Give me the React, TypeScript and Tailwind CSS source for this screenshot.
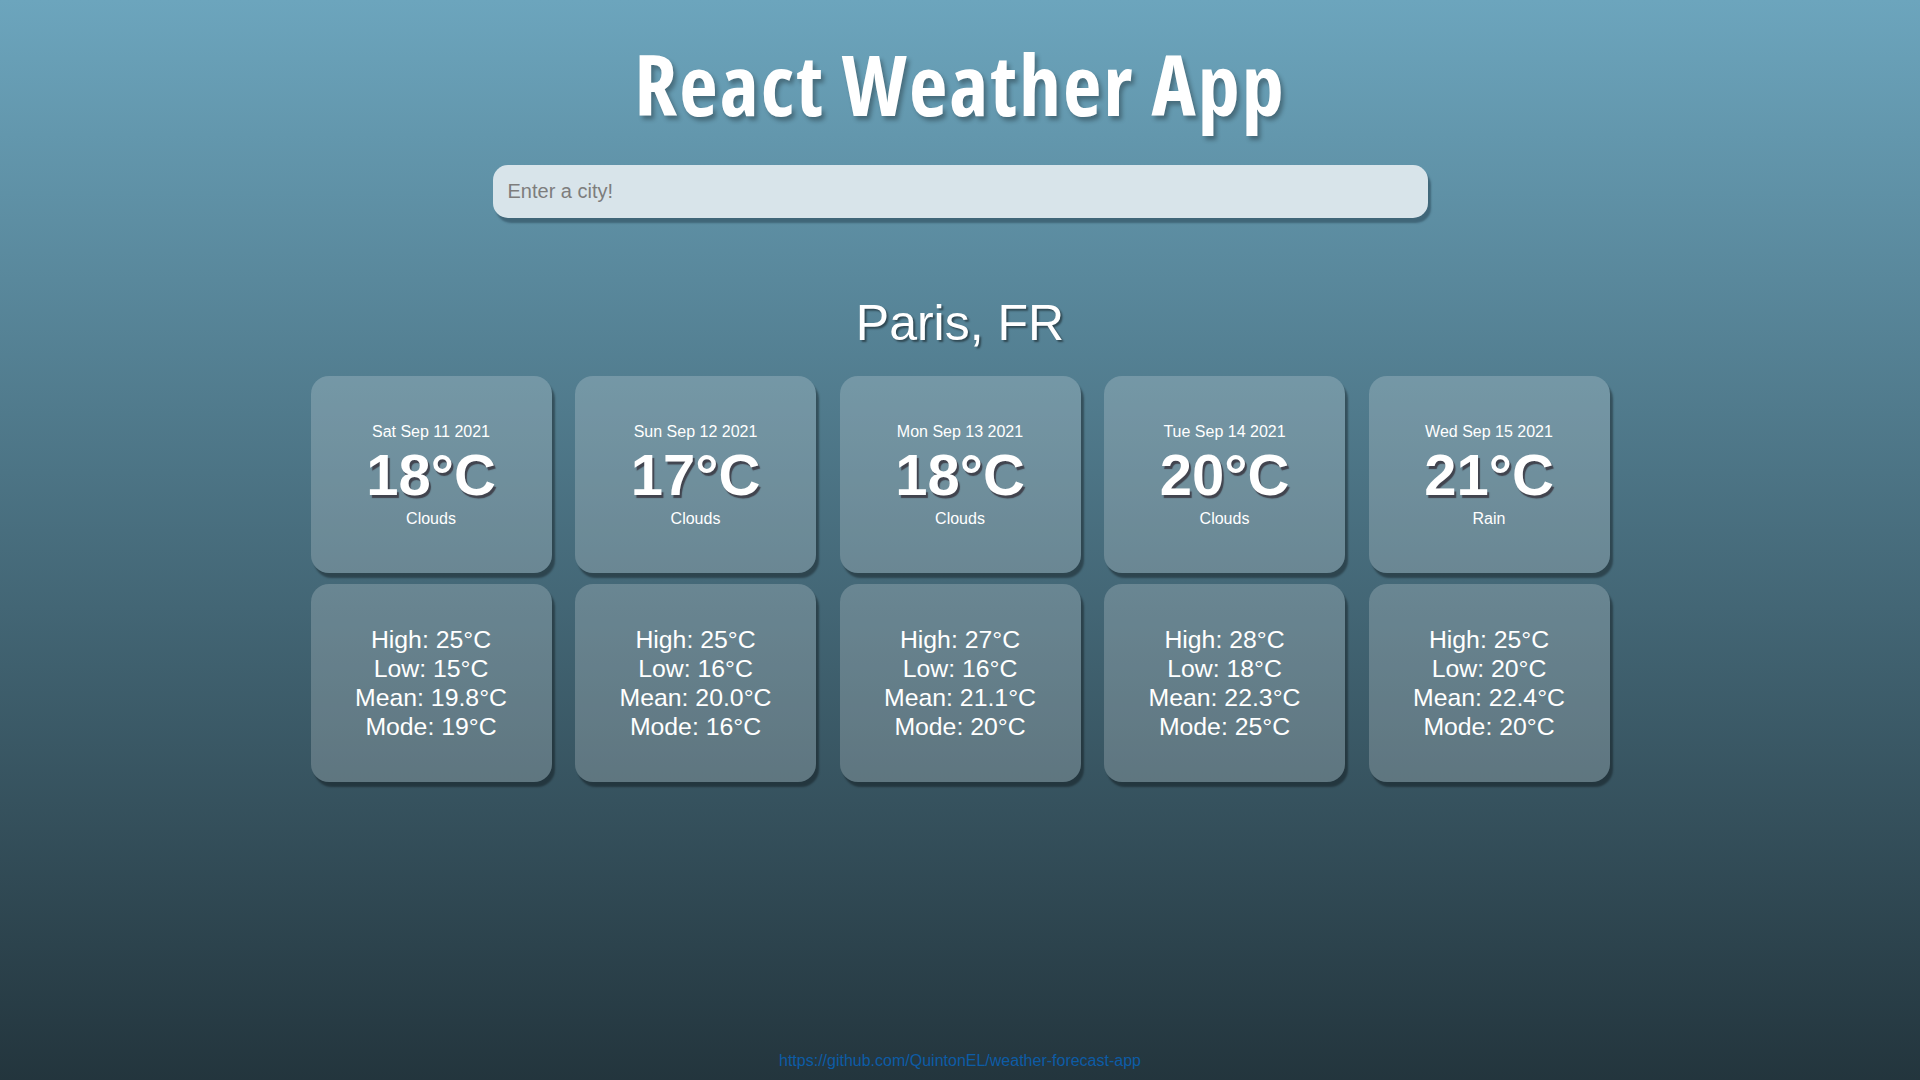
import React from 'react';

interface DayForecast {
  date: string;
  temp: number;
  weather: string;
  high: number;
  low: number;
  mean: string;
  mode: number;
}

const FORECAST: DayForecast[] = [
  { date: 'Sat Sep 11 2021', temp: 18, weather: 'Clouds', high: 25, low: 15, mean: '19.8', mode: 19 },
  { date: 'Sun Sep 12 2021', temp: 17, weather: 'Clouds', high: 25, low: 16, mean: '20.0', mode: 16 },
  { date: 'Mon Sep 13 2021', temp: 18, weather: 'Clouds', high: 27, low: 16, mean: '21.1', mode: 20 },
  { date: 'Tue Sep 14 2021', temp: 20, weather: 'Clouds', high: 28, low: 18, mean: '22.3', mode: 25 },
  { date: 'Wed Sep 15 2021', temp: 21, weather: 'Rain', high: 25, low: 20, mean: '22.4', mode: 20 },
];

const cardClass =
  'flex flex-col items-center justify-center rounded-[18px] bg-white/20 text-white shadow-[3px_5px_2px_rgba(0,0,0,0.35)]';

export default function App() {
  return (
    <div className="flex min-h-screen flex-col items-center bg-[linear-gradient(to_bottom,#6ca5bd,#23353d)] font-['Liberation_Sans',Arial,sans-serif]">
      <h1 className="mt-[42px] text-[84px] font-bold leading-none tracking-[2px] text-white font-['Open_Sans','Noto_Sans',sans-serif] [font-stretch:85%] [text-shadow:3px_4px_4px_rgba(0,0,0,0.3)]">
        React Weather App
      </h1>

      <input
        autoFocus
        type="text"
        placeholder="Enter a city!"
        className="mt-[39px] h-[53px] w-[935px] rounded-[15px] bg-[#d8e4ea] px-[15px] text-[20px] text-[#333] outline-none shadow-[3px_5px_2px_rgba(40,70,85,0.55)] placeholder:text-[#7d7d7d]"
      />

      <h2 className="mt-[80px] text-[50px] leading-none text-white [text-shadow:2px_2px_2px_rgba(0,0,0,0.45)]">
        Paris, FR
      </h2>

      <div className="mt-[28px] grid w-[1299px] grid-cols-5 gap-x-[23.5px] gap-y-[11px]">
        {FORECAST.map((day) => (
          <div key={day.date} className={`${cardClass} h-[197px] pt-[2px] leading-[normal]`}>
            <p className="text-[16px]">{day.date}</p>
            <p className="text-[58px] font-bold [text-shadow:2px_3px_1px_rgba(60,60,70,0.9)]">{day.temp}°C</p>
            <p className="mt-[2px] text-[16px]">{day.weather}</p>
          </div>
        ))}
        {FORECAST.map((day) => (
          <div key={`${day.date}-stats`} className={`${cardClass} h-[198px] text-[24.8px] leading-[29px]`}>
            <p>High: {day.high}°C</p>
            <p>Low: {day.low}°C</p>
            <p>Mean: {day.mean}°C</p>
            <p>Mode: {day.mode}°C</p>
          </div>
        ))}
      </div>

      <footer className="mt-auto pb-[7px]">
        <a href="https://github.com/QuintonEL/weather-forecast-app" className="text-[16px] text-[#0d5ca6]">
          https://github.com/QuintonEL/weather-forecast-app
        </a>
      </footer>
    </div>
  );
}
